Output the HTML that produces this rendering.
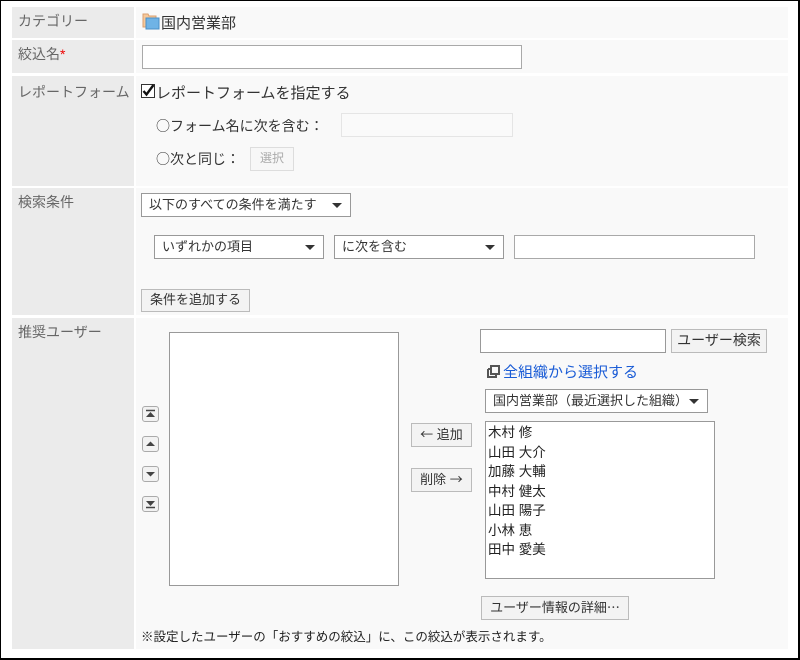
<!DOCTYPE html>
<html><head><meta charset="utf-8"><style>
*{box-sizing:border-box;margin:0;padding:0}
body{width:800px;height:660px;background:#fff;font-family:"Liberation Sans","Noto Sans CJK JP",sans-serif;font-size:14px;color:#333;position:relative;overflow:hidden}
.frame{position:absolute;left:0;top:0;width:800px;height:660px;border:1px solid #000;border-width:1px 2px 2px 1px}
.a{position:absolute}
.j{font-family:"Noto Sans CJK JP",sans-serif}
.lab{position:absolute;left:12px;width:122px;background:#ebebeb;color:#666;padding:4px 0 0 6px}
.val{position:absolute;left:136px;width:652px;background:#f9f9f9}
.inp{position:absolute;background:#fff;border:1px solid #a9a9a9}
.btn{position:absolute;background:#f3f3f3;border:1px solid #bbb;font-size:13px;color:#333;text-align:center;line-height:20px}
.sel{position:absolute;background:#fff;border:1px solid #999;font-size:13px;padding-left:7px;line-height:22px;color:#333}
.sel:after{content:"";position:absolute;right:8px;top:9px;border-left:5px solid transparent;border-right:5px solid transparent;border-top:5px solid #333}
.arr{position:absolute;left:142px;width:17px;height:16px;border:1px solid #aaa;border-radius:3px;background:#f2f2f2}
</style></head><body>
<div class="frame"></div>
<div class="lab" style="top:7px;height:31px">カテゴリー</div>
<div class="val" style="top:7px;height:31px"></div>
<div class="lab" style="top:40px;height:33px">絞込名<span style="color:#e00">*</span></div>
<div class="val" style="top:40px;height:33px"></div>
<div class="lab" style="top:76px;height:110px;padding-top:6px">レポートフォーム</div>
<div class="val" style="top:76px;height:110px"></div>
<div class="lab" style="top:188px;height:127px;padding-top:4px">検索条件</div>
<div class="val" style="top:188px;height:127px"></div>
<div class="lab" style="top:318px;height:331px;padding-top:4px">推奨ユーザー</div>
<div class="val" style="top:318px;height:331px"></div>

<svg class="a" style="left:142px;top:13px" width="18" height="17" viewBox="0 0 18 17"><path d="M1 1h5l1 2h7v11H1z" fill="#f6c89a" stroke="#d9a070"/><path d="M4 5h13v11H4z" fill="#6fb3e6" stroke="#4a8fc7"/></svg>
<div class="a" style="left:161px;top:12px;font-size:15px">国内営業部</div>

<div class="inp" style="left:142px;top:45px;width:380px;height:24px"></div>

<svg class="a" style="left:141px;top:83px" width="14" height="15"><rect x="0.5" y="1.5" width="13" height="13" fill="#fff" stroke="#333"/><path d="M2.5 8l3 3.5L12.5 2" stroke="#111" stroke-width="2.4" fill="none"/></svg>
<div class="a" style="left:156px;top:82px;font-size:15px">レポートフォームを指定する</div>
<div class="a" style="left:156px;top:116px;font-size:14px"><span class="j">○</span>フォーム名に次を含む<span class="j">：</span></div>
<div class="inp" style="left:341px;top:113px;width:172px;height:24px;border-color:#e5e5e5;background:#fafafa"></div>
<div class="a" style="left:156px;top:149px"><span class="j">○</span>次と同じ<span class="j">：</span></div>
<div class="btn" style="left:250px;top:147px;width:44px;height:24px;color:#aaa;border-color:#ddd;background:#f7f7f7;font-size:12px">選択</div>

<div class="sel" style="left:141px;top:193px;width:210px;height:24px">以下のすべての条件を満たす</div>
<div class="sel" style="left:154px;top:235px;width:170px;height:24px">いずれかの項目</div>
<div class="sel" style="left:334px;top:235px;width:170px;height:24px">に次を含む</div>
<div class="inp" style="left:514px;top:235px;width:241px;height:24px"></div>
<div class="btn" style="left:141px;top:289px;width:109px;height:23px">条件を追加する</div>

<div class="inp" style="left:169px;top:332px;width:230px;height:254px;border-color:#999"></div>
<div class="arr" style="top:406px"><svg width="15" height="14"><path d="M3 3.5h9" stroke="#444" stroke-width="1.5"/><path d="M3 10l4.5-5 4.5 5z" fill="#444"/></svg></div>
<div class="arr" style="top:436px"><svg width="15" height="14"><path d="M3 9l4.5-4.5 4.5 4.5z" fill="#444"/></svg></div>
<div class="arr" style="top:466px"><svg width="15" height="14"><path d="M3 5l4.5 4.5 4.5-4.5z" fill="#444"/></svg></div>
<div class="arr" style="top:496px"><svg width="15" height="14"><path d="M3 10.5h9" stroke="#444" stroke-width="1.5"/><path d="M3 4l4.5 5 4.5-5z" fill="#444"/></svg></div>
<div class="btn" style="left:411px;top:423px;width:61px;height:24px"><span class="j">←</span> 追加</div>
<div class="btn" style="left:411px;top:468px;width:61px;height:24px">削除 <span class="j">→</span></div>

<div class="inp" style="left:480px;top:329px;width:186px;height:24px;border-color:#999"></div>
<div class="btn" style="left:671px;top:329px;width:96px;height:24px;font-size:14px">ユーザー検索</div>
<svg class="a" style="left:487px;top:365px" width="13" height="13"><path d="M4 1h8v8H4z M1 4h3 M1 4v8h8v-3" stroke="#555" stroke-width="2" fill="none"/></svg>
<div class="a" style="left:503px;top:361px;font-size:15px;color:#1a5cd6">全組織から選択する</div>
<div class="sel" style="left:485px;top:389px;width:223px;height:24px;font-size:13px">国内営業部（最近選択した組織）</div>
<div class="inp" style="left:485px;top:421px;width:230px;height:158px;border-color:#999;padding:1px 2px;line-height:19.5px;font-size:13.5px;color:#222">木村 修<br>山田 大介<br>加藤 大輔<br>中村 健太<br>山田 陽子<br>小林 恵<br>田中 愛美</div>
<div class="btn" style="left:481px;top:596px;width:148px;height:24px;font-size:13px">ユーザー情報の詳細<span class="j">…</span></div>
<div class="a" style="left:141px;top:626px;font-size:12.5px;color:#222">※設定したユーザーの「おすすめの絞込」に、この絞込が表示されます。</div>
</body></html>
